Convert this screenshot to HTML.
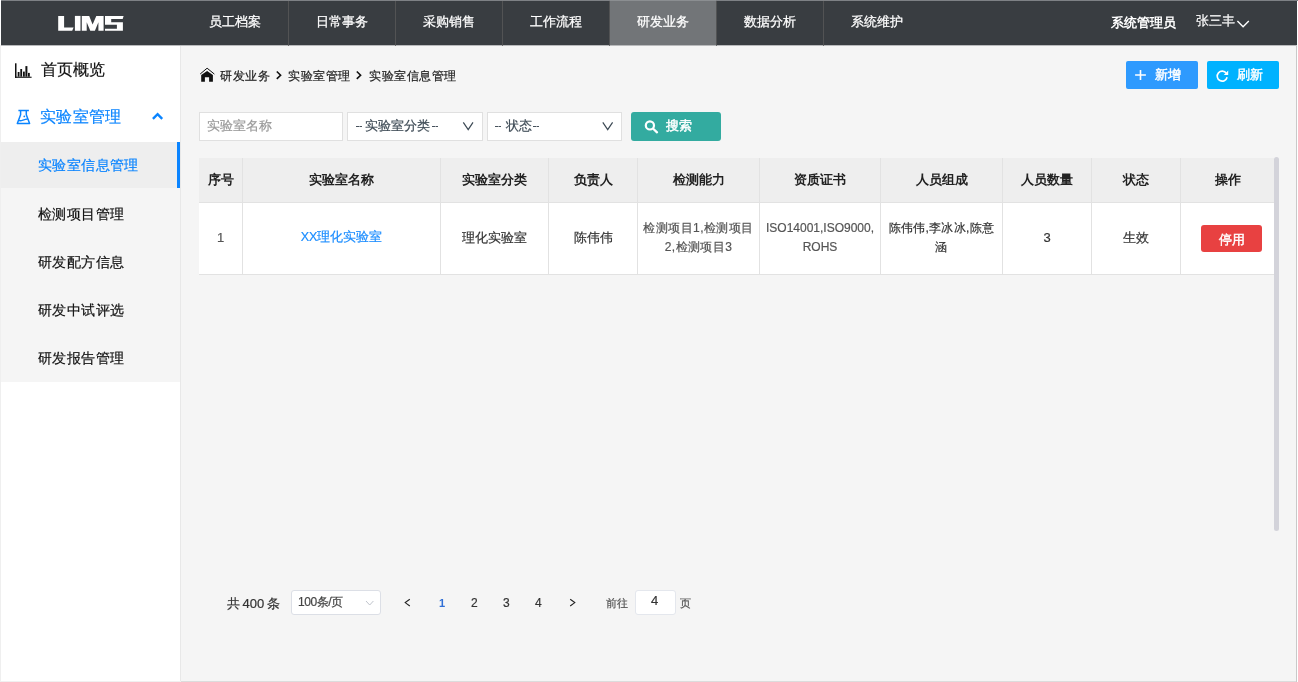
<!DOCTYPE html>
<html><head><meta charset="utf-8">
<style>
*{margin:0;padding:0;box-sizing:border-box}
html,body{width:1298px;height:682px;overflow:hidden;background:#fff}
body{font-family:"Liberation Sans",sans-serif;position:relative;color:#333;-webkit-font-smoothing:antialiased}
.t,.nav,.sub,.th,.td{will-change:transform}
.sub,.td,.t{-webkit-text-stroke:0.2px currentColor}
.abs{position:absolute}
#topline{left:0;top:0;width:1298px;height:1px;background:#7e8185}
#header{left:1px;top:1px;width:1296px;height:44px;background:#393d41}
.nav{position:absolute;top:1px;height:44px;width:107px;line-height:41px;text-align:center;color:#fff;font-size:13px;border-left:1px solid #525354;-webkit-text-stroke:0.25px #fff}
.nav.active{background:#727578}
#side{left:1px;top:45px;width:179px;height:636px;background:#fff}
#sideborder{left:180px;top:45px;width:1px;height:637px;background:#e8e8e8}
#content{left:181px;top:45px;width:1115px;height:636px;background:#f5f5f5}
#rborder{left:1296px;top:45px;width:1px;height:637px;background:#c9c9c9}
#bborder{left:181px;top:681px;width:1115px;height:1px;background:#dcdcdc}
#sbborder{left:0;top:681px;width:181px;height:1px;background:#f0f0f0}
#lborder{left:0;top:0;width:1px;height:682px;background:#efefef}
.sub{position:absolute;left:1px;width:179px;height:48px;background:#f5f5f5;font-size:14px;line-height:48px;padding-left:37px;color:#111;letter-spacing:0.4px}
.t{position:absolute;white-space:nowrap}
.th{position:absolute;top:158px;height:44px;line-height:44px;text-align:center;font-size:13px;font-weight:bold;color:#222}
.td{position:absolute;top:203px;height:69px;display:flex;align-items:center;justify-content:center;text-align:center;font-size:12px;color:#555;line-height:19px}
.sel{top:116.5px;font-size:13px;line-height:18px;color:#3d4a55}
.dd{letter-spacing:-1.6px;margin-right:1.6px}
.vl{position:absolute;width:1px;background:#e2e2e2}
</style></head><body>
<div id="topline" class="abs"></div>
<div id="header" class="abs"></div>
<div id="lborder" class="abs"></div>
<div class="abs" style="left:0;top:0;width:1px;height:45px;background:#fff"></div>
<div class="abs" style="left:610px;top:0;width:106px;height:1px;background:#8b8e91"></div>
<svg class="abs" style="left:0;top:0" width="140" height="45" viewBox="0 0 140 45">
<polygon fill="#fff" points="58.2,15.9 64.1,15.9 64.1,27.6 73.6,27.6 72.2,30.8 58.2,30.8"/>
<polygon fill="#fff" points="74.9,15.9 80.5,15.9 80.5,30.8 74.9,30.8"/>
<polygon fill="#fff" points="81.8,15.9 89.2,15.9 92.6,24.6 96.3,15.9 103.6,15.9 103.6,30.8 98.4,30.8 98.4,22.3 94.9,30.8 90.3,30.8 86.7,22.3 86.7,30.8 81.8,30.8"/>
<polygon fill="#fff" points="105,15.9 123.6,15.9 122.7,19.1 111.2,19.1 111.2,22.3 122.9,22.3 122.9,30.8 105,30.8 105,28.7 116.9,28.7 116.9,24.8 105,24.8"/>
</svg>
<div class="nav" style="left:181px;border-left:none;width:107px">员工档案</div>
<div class="nav" style="left:288px">日常事务</div>
<div class="nav" style="left:395px">采购销售</div>
<div class="nav" style="left:502px">工作流程</div>
<div class="nav active" style="left:609px">研发业务</div>
<div class="nav" style="left:716px">数据分析</div>
<div class="nav" style="left:823px">系统维护</div>
<div class="t" style="left:1111px;top:14px;font-size:12.5px;font-weight:bold;color:#fff;line-height:18px;-webkit-text-stroke:0">系统管理员</div>
<div class="t" style="left:1196px;top:12px;font-size:13px;color:#fff;line-height:18px">张三丰</div>
<svg class="abs" style="left:1234px;top:17px" width="18" height="14" viewBox="0 0 18 14"><polyline points="3.4,4.1 9.1,9.8 14.8,4.1" fill="none" stroke="#fff" stroke-width="1.4"/></svg>

<div id="side" class="abs"></div>
<div id="sideborder" class="abs"></div>
<div id="content" class="abs"></div>
<div id="rborder" class="abs"></div>
<div id="bborder" class="abs"></div>
<div id="sbborder" class="abs"></div>
<div class="abs" style="left:1px;top:45px;width:1295px;height:1px;background:#b9babc"></div>
<div class="abs" style="left:288px;top:45px;width:1px;height:1px;background:#6a6b6c"></div><div class="abs" style="left:395px;top:45px;width:1px;height:1px;background:#6a6b6c"></div><div class="abs" style="left:502px;top:45px;width:1px;height:1px;background:#6a6b6c"></div><div class="abs" style="left:609px;top:45px;width:1px;height:1px;background:#6a6b6c"></div><div class="abs" style="left:716px;top:45px;width:1px;height:1px;background:#6a6b6c"></div><div class="abs" style="left:823px;top:45px;width:1px;height:1px;background:#6a6b6c"></div>

<!-- sidebar -->
<svg class="abs" style="left:10px;top:56px" width="30" height="30" viewBox="0 0 30 30">
<rect x="5" y="7.3" width="1.5" height="14.5" fill="#111"/>
<rect x="5" y="20.7" width="16.6" height="1.1" fill="#111"/>
<rect x="7.7" y="16" width="1.8" height="4.7" fill="#111"/>
<rect x="10.3" y="13" width="1.8" height="7.7" fill="#111"/>
<rect x="13" y="15.6" width="1.8" height="5.1" fill="#111"/>
<rect x="15.4" y="10.1" width="2" height="10.6" fill="#111"/>
<rect x="18" y="16.9" width="1.8" height="3.8" fill="#111"/>
</svg>
<div class="t" style="left:41px;top:59px;font-size:16px;line-height:22px;color:#111">首页概览</div>
<svg class="abs" style="left:10px;top:102px" width="30" height="30" viewBox="0 0 30 30">
<g fill="none" stroke="#0a84ff" stroke-width="1.5" stroke-linejoin="round">
<line x1="8.4" y1="8.5" x2="18.9" y2="8.5"/>
<path d="M10.6 8.5 V12.8 L7.3 21.6 H19.6 L16.3 12.8 V8.5"/>
<path d="M8.8 18.4 C11 19.5 13 17.6 17.6 17.1"/>
</g>
<circle cx="14.3" cy="14.4" r="0.9" fill="#0a84ff"/>
</svg>
<div class="t" style="left:40px;top:106px;font-size:16px;line-height:22px;color:#0a84ff;letter-spacing:0.35px">实验室管理</div>
<svg class="abs" style="left:145px;top:105px" width="25" height="25" viewBox="0 0 25 25"><polyline points="7.9,13.9 12.6,9.2 17.2,13.9" fill="none" stroke="#0a84ff" stroke-width="2.4"/></svg>

<div class="sub" style="top:142px;height:46px;line-height:46px;background:#eee;color:#0a84ff;width:176px">实验室信息管理</div>
<div class="abs" style="left:177px;top:142px;width:3px;height:46px;background:#0a84ff"></div>
<div class="sub" style="top:190px">检测项目管理</div>
<div class="abs" style="left:1px;top:188px;width:179px;height:2px;background:#f5f5f5"></div>
<div class="sub" style="top:238px">研发配方信息</div>
<div class="sub" style="top:286px">研发中试评选</div>
<div class="sub" style="top:334px">研发报告管理</div>

<!-- breadcrumb -->
<svg class="abs" style="left:196px;top:63px" width="22" height="22" viewBox="196 63 22 22">
<polyline points="200.2,74 207.1,68.2 214.4,74.1" fill="none" stroke="#111" stroke-width="1"/>
<polygon fill="#111" points="201.2,75.1 207.1,70.9 212.9,75.1 212.9,81.7 209.1,81.7 209.1,77.2 204.9,77.2 204.9,81.7 201.2,81.7"/>
</svg>
<div class="t" style="left:220px;top:67px;font-size:12px;line-height:18px;color:#222;letter-spacing:0.5px">研发业务</div>
<svg class="abs" style="left:274px;top:68px" width="10" height="14" viewBox="0 0 10 14"><polyline points="2.8,3.5 6.6,7.2 2.8,10.9" fill="none" stroke="#111" stroke-width="1.6"/></svg>
<div class="t" style="left:288px;top:67px;font-size:12px;line-height:18px;color:#222;letter-spacing:0.5px">实验室管理</div>
<svg class="abs" style="left:354px;top:68px" width="10" height="14" viewBox="0 0 10 14"><polyline points="2.8,3.5 6.6,7.2 2.8,10.9" fill="none" stroke="#111" stroke-width="1.6"/></svg>
<div class="t" style="left:369px;top:67px;font-size:12px;line-height:18px;color:#222;letter-spacing:0.5px">实验室信息管理</div>

<!-- top buttons -->
<div class="abs" style="left:1126px;top:61px;width:72px;height:28px;background:#2e9afe;border-radius:2px"></div>
<svg class="abs" style="left:1130px;top:62px" width="25" height="25" viewBox="1130 62 25 25"><path d="M1135.1 75 H1145.9 M1140.5 69.9 V80.1" stroke="#fff" stroke-width="1.6" fill="none"/></svg>
<div class="t" style="left:1155px;top:66px;font-size:13px;line-height:18px;color:#fff;-webkit-text-stroke:0.45px #fff">新增</div>
<div class="abs" style="left:1207px;top:61px;width:72px;height:28px;background:#00b2ff;border-radius:2px"></div>
<svg class="abs" style="left:1210px;top:62px" width="25" height="25" viewBox="1210 62 25 25">
<path d="M1226.3 73.2 A5 5 0 1 0 1227.1 77.3" fill="none" stroke="#fff" stroke-width="1.6"/>
<polygon points="1228.2,70.6 1228.2,74.9 1223.8,74.9" fill="#fff"/>
</svg>
<div class="t" style="left:1237px;top:66px;font-size:13px;line-height:18px;color:#fff;-webkit-text-stroke:0.45px #fff">刷新</div>

<!-- search bar -->
<div class="abs" style="left:199px;top:112px;width:144px;height:29px;background:#fff;border:1px solid #e0e0e0"></div>
<div class="t" style="left:207px;top:117px;font-size:13px;line-height:18px;color:#999">实验室名称</div>
<div class="abs" style="left:347px;top:112px;width:136px;height:29px;background:#fff;border:1px solid #e0e0e0"></div>
<div class="abs" style="left:356px;top:126px;width:6px;height:1px;background:linear-gradient(90deg,#47525c 3px,#9aa1a7 3px,#9aa1a7 4px,#47525c 4px)"></div>
<div class="t sel" style="left:365px">实验室分类</div>
<div class="abs" style="left:432px;top:126px;width:6px;height:1px;background:linear-gradient(90deg,#47525c 3px,#9aa1a7 3px,#9aa1a7 4px,#47525c 4px)"></div>
<svg class="abs" style="left:460px;top:118px" width="16" height="16" viewBox="460 118 16 16"><polyline points="463.3,122.3 468.2,129.7 473,122.3" fill="none" stroke="#3d4a55" stroke-width="1.2"/></svg>
<div class="abs" style="left:487px;top:112px;width:135px;height:29px;background:#fff;border:1px solid #e0e0e0"></div>
<div class="abs" style="left:495px;top:126px;width:6px;height:1px;background:linear-gradient(90deg,#47525c 3px,#9aa1a7 3px,#9aa1a7 4px,#47525c 4px)"></div>
<div class="t sel" style="left:506px">状态</div>
<div class="abs" style="left:533px;top:126px;width:6px;height:1px;background:linear-gradient(90deg,#47525c 3px,#9aa1a7 3px,#9aa1a7 4px,#47525c 4px)"></div>
<svg class="abs" style="left:600px;top:118px" width="16" height="16" viewBox="600 118 16 16"><polyline points="602.8,122.3 607.7,129.7 612.6,122.3" fill="none" stroke="#3d4a55" stroke-width="1.2"/></svg>
<div class="abs" style="left:631px;top:112px;width:90px;height:29px;background:#33aba0;border-radius:3px"></div>
<svg class="abs" style="left:640px;top:114px" width="25" height="25" viewBox="640 114 25 25">
<circle cx="649.9" cy="125.4" r="4.1" fill="none" stroke="#fff" stroke-width="2.2"/>
<line x1="653.5" y1="129" x2="657" y2="132.3" stroke="#fff" stroke-width="2.3" stroke-linecap="round"/>
</svg>
<div class="t" style="left:666px;top:117px;font-size:13px;line-height:18px;color:#fff;-webkit-text-stroke:0.45px #fff">搜索</div>

<!-- table -->
<div class="abs" style="left:199px;top:158px;width:1075px;height:44px;background:#eee"></div>
<div class="abs" style="left:199px;top:202px;width:1075px;height:1px;background:#e2e2e2"></div>
<div class="abs" style="left:199px;top:203px;width:1075px;height:71px;background:#fff"></div>
<div class="abs" style="left:199px;top:274px;width:1075px;height:1px;background:#e2e2e2"></div>
<div class="vl" style="left:242px;top:158px;height:116px"></div>
<div class="vl" style="left:440px;top:158px;height:116px"></div>
<div class="vl" style="left:548px;top:158px;height:116px"></div>
<div class="vl" style="left:637px;top:158px;height:116px"></div>
<div class="vl" style="left:759px;top:158px;height:116px"></div>
<div class="vl" style="left:880px;top:158px;height:116px"></div>
<div class="vl" style="left:1002px;top:158px;height:116px"></div>
<div class="vl" style="left:1091px;top:158px;height:116px"></div>
<div class="vl" style="left:1180px;top:158px;height:116px"></div>

<div class="th" style="left:199px;width:43px">序号</div>
<div class="th" style="left:243px;width:197px">实验室名称</div>
<div class="th" style="left:441px;width:107px">实验室分类</div>
<div class="th" style="left:549px;width:88px">负责人</div>
<div class="th" style="left:638px;width:121px">检测能力</div>
<div class="th" style="left:760px;width:120px">资质证书</div>
<div class="th" style="left:881px;width:121px">人员组成</div>
<div class="th" style="left:1003px;width:88px">人员数量</div>
<div class="th" style="left:1092px;width:88px">状态</div>
<div class="th" style="left:1181px;width:93px">操作</div>

<div class="td" style="left:199px;width:43px;font-size:13px">1</div>
<div class="td" style="left:243px;width:197px;font-size:12.5px;color:#1a8cff">XX理化实验室</div>
<div class="td" style="left:441px;width:107px;font-size:13px;color:#333">理化实验室</div>
<div class="td" style="left:549px;width:88px;font-size:13px;color:#333">陈伟伟</div>
<div class="td" style="left:638px;width:121px;letter-spacing:0.4px">检测项目1,检测项目<br>2,检测项目3</div>
<div class="td" style="left:760px;width:120px">ISO14001,ISO9000,<br>ROHS</div>
<div class="td" style="left:881px;width:121px;color:#333;letter-spacing:0.3px">陈伟伟,李冰冰,陈意<br>涵</div>
<div class="td" style="left:1003px;width:88px;font-size:13px;color:#333">3</div>
<div class="td" style="left:1092px;width:88px;font-size:13px;color:#333">生效</div>
<div class="abs" style="left:1201px;top:225px;width:61px;height:27px;background:#e84141;border-radius:3px;color:#fff;font-size:13px;line-height:27px;text-align:center"><span style="display:inline-block;will-change:transform;position:relative;top:0.5px;-webkit-text-stroke:0.45px #fff">停用</span></div>

<!-- scrollbar -->
<div class="abs" style="left:1274px;top:157px;width:5px;height:374px;background:#d3d3da;border-radius:3px"></div>

<!-- pagination -->
<div class="t" style="left:227px;top:595px;font-size:13px;line-height:18px;color:#333;word-spacing:-1px">共 400 条</div>
<div class="abs" style="left:291px;top:590px;width:90px;height:25px;background:#fff;border:1px solid #dcdfe6;border-radius:3px"></div>
<div class="t" style="left:298px;top:594px;font-size:12px;line-height:16px;color:#444;letter-spacing:-0.45px">100条/页</div>
<svg class="abs" style="left:362px;top:596px" width="14" height="14" viewBox="0 0 14 14"><polyline points="4,5 7.7,9 11.4,5" fill="none" stroke="#c0c4cc" stroke-width="1"/></svg>
<svg class="abs" style="left:400px;top:596px" width="14" height="14" viewBox="0 0 14 14"><polyline points="9.8,3.2 5.2,6.6 9.8,10" fill="none" stroke="#222" stroke-width="1.1"/></svg>
<div class="t" style="left:439px;top:595px;font-size:11px;line-height:16px;color:#2f6fd6;font-weight:bold;-webkit-text-stroke:0">1</div>
<div class="t" style="left:471px;top:595px;font-size:12px;line-height:16px;color:#333">2</div>
<div class="t" style="left:503px;top:595px;font-size:12px;line-height:16px;color:#333">3</div>
<div class="t" style="left:535px;top:595px;font-size:12px;line-height:16px;color:#333">4</div>
<svg class="abs" style="left:566px;top:596px" width="14" height="14" viewBox="0 0 14 14"><polyline points="4.2,3.2 8.8,6.6 4.2,10" fill="none" stroke="#222" stroke-width="1.1"/></svg>
<div class="t" style="left:606px;top:595px;font-size:11px;line-height:16px;color:#555">前往</div>
<div class="abs" style="left:635px;top:590px;width:41px;height:25px;background:#fff;border:1px solid #e4e7ed;border-radius:3px"></div>
<div class="t" style="left:651px;top:593px;font-size:13px;line-height:16px;color:#333">4</div>
<div class="t" style="left:680px;top:595px;font-size:11px;line-height:16px;color:#555">页</div>
</body></html>
